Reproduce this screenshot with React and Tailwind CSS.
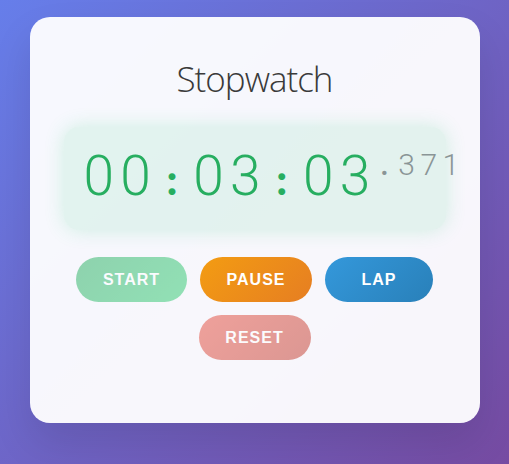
const MAIN = "00:03:03".split("");
const MS = ".371".split("");

export default function App() {
  return (
    <div className="min-h-[464px] w-full bg-[linear-gradient(135deg,#667eea_0%,#764ba2_100%)] pt-[17px] font-['Liberation_Sans',Arial,sans-serif]">
      <div className="mx-auto w-[450px] h-[406px] rounded-[20px] bg-white/95 shadow-[0_20px_40px_rgba(0,0,0,0.1)] px-[34px] pt-[44px]">
        <h1 className="text-center text-[35px] leading-none font-light tracking-[-1px] text-[#3a3a3a] font-['Open_Sans',sans-serif]">
          Stopwatch
        </h1>
        <div className="mt-[31px] h-[103px] rounded-[15px] bg-[rgba(46,204,113,0.1)] shadow-[0_0_20px_rgba(46,204,113,0.2)] pl-[17px] pt-[22px] whitespace-nowrap font-['Roboto',sans-serif]">
          {MAIN.map((c, i) =>
            c === ":" ? (
              <span key={i} className="inline-block w-[36.6px] text-center text-[42px] leading-none font-black font-['Lato',sans-serif] text-[#27ae60]">
                :
              </span>
            ) : (
              <span key={i} className="inline-block w-[36.6px] text-center text-[55px] leading-none font-light text-[#27ae60]">
                {c}
              </span>
            )
          )}
          <span className="inline-block align-[20px]">
            {MS.map((c, i) =>
              c === "." ? (
                <span key={i} className="inline-block w-[22.2px] text-center text-[26px] leading-none font-black font-['Lato',sans-serif] text-[#8a9596]">
                  .
                </span>
              ) : (
                <span key={i} className="inline-block w-[22.2px] text-center text-[30px] leading-none font-light text-[#8a9596]">
                  {c}
                </span>
              )
            )}
          </span>
        </div>
        <div className="mt-[27px] flex flex-wrap justify-center gap-x-[13px] gap-y-[13px]">
          <button className="w-[111px] h-[45px] rounded-full bg-[linear-gradient(135deg,#27ae60,#2ecc71)] opacity-50 text-white font-bold text-[16px] tracking-[1px]">
            START
          </button>
          <button className="w-[112px] h-[45px] rounded-full bg-[linear-gradient(135deg,#f39c12,#e67e22)] text-white font-bold text-[16px] tracking-[1px]">
            PAUSE
          </button>
          <button className="w-[108px] h-[45px] rounded-full bg-[linear-gradient(135deg,#3498db,#2980b9)] text-white font-bold text-[16px] tracking-[1px]">
            LAP
          </button>
          <button className="w-[112px] h-[45px] rounded-full bg-[linear-gradient(135deg,#e74c3c,#c0392b)] opacity-50 text-white font-bold text-[16px] tracking-[1px]">
            RESET
          </button>
        </div>
      </div>
    </div>
  );
}
